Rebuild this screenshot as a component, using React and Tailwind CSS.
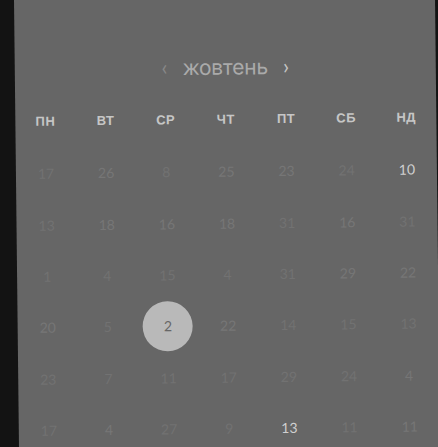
const days = ['пн', 'вт', 'ср', 'чт', 'пт', 'сб', 'нд']

// d = dim, m = mid, b = bright, s = selected
const rows = [
  [[17, 'd'], [26, 'm'], [8, 'd'], [25, 'm'], [23, 'm'], [24, 'd'], [10, 'b']],
  [[13, 'd'], [18, 'm'], [16, 'm'], [18, 'm'], [31, 'd'], [16, 'm'], [31, 'd']],
  [[1, 'd'], [4, 'd'], [15, 'd'], [4, 'd'], [31, 'd'], [29, 'm'], [22, 'm']],
  [[20, 'm'], [5, 'd'], [2, 's'], [22, 'm'], [14, 'd'], [15, 'd'], [13, 'd']],
  [[23, 'd'], [7, 'd'], [11, 'd'], [17, 'd'], [29, 'd'], [24, 'd'], [4, 'm']],
  [[17, 'd'], [4, 'm'], [27, 'd'], [9, 'd'], [13, 'b'], [11, 'd'], [11, 'm']],
]

function Day({ n, kind }) {
  if (kind === 's') {
    return (
      <div className="w-[50px] h-[50px] rounded-full bg-[#b9b9b9] flex items-center justify-center text-[#676767]">
        {n}
      </div>
    )
  }
  const color = kind === 'b' ? 'text-[#d0d0d0]' : kind === 'm' ? 'text-[#767676]' : 'text-[#727272]'
  return <span className={color}>{n}</span>
}

export default function App() {
  return (
    <div className="w-[438px] h-[447px] bg-[#131313] overflow-hidden">
      <div
        className="ml-[14px] w-[421px] h-[480px] bg-[#666666] origin-top-left -rotate-[0.64deg] flex flex-col pt-[56px]"
        style={{ fontFamily: 'Lato, "Open Sans", sans-serif' }}
      >
        <div className="h-[28px] flex items-center justify-center text-[#aaaaaa]">
          <span className="text-[22px] text-[#888888] -mt-[4px]">‹</span>
          <span className="mx-[15px] text-[21px] leading-none tracking-[-0.2px] -mt-[1px]" style={{ fontFamily: 'Inter, sans-serif' }}>
            жовтень
          </span>
          <span className="text-[22px] text-[#c4c4c4] -mt-[4px]">›</span>
        </div>
        <div className="mt-[28px] h-[20px] grid grid-cols-7 items-center text-center">
          {days.map(d => (
            <span
              key={d}
              className="uppercase font-bold text-[13px] tracking-[0.5px] text-[#c6c6c6]"
              style={{ fontFamily: '"Liberation Sans", Arial, sans-serif' }}
            >
              {d}
            </span>
          ))}
        </div>
        <div className="mt-[16px] grid grid-cols-7 auto-rows-[51.4px] text-[14px]">
          {rows.map((row, i) =>
            row.map(([n, kind], j) => (
              <div key={i + '-' + j} className="flex items-center justify-center">
                <Day n={n} kind={kind} />
              </div>
            ))
          )}
        </div>
      </div>
    </div>
  )
}
